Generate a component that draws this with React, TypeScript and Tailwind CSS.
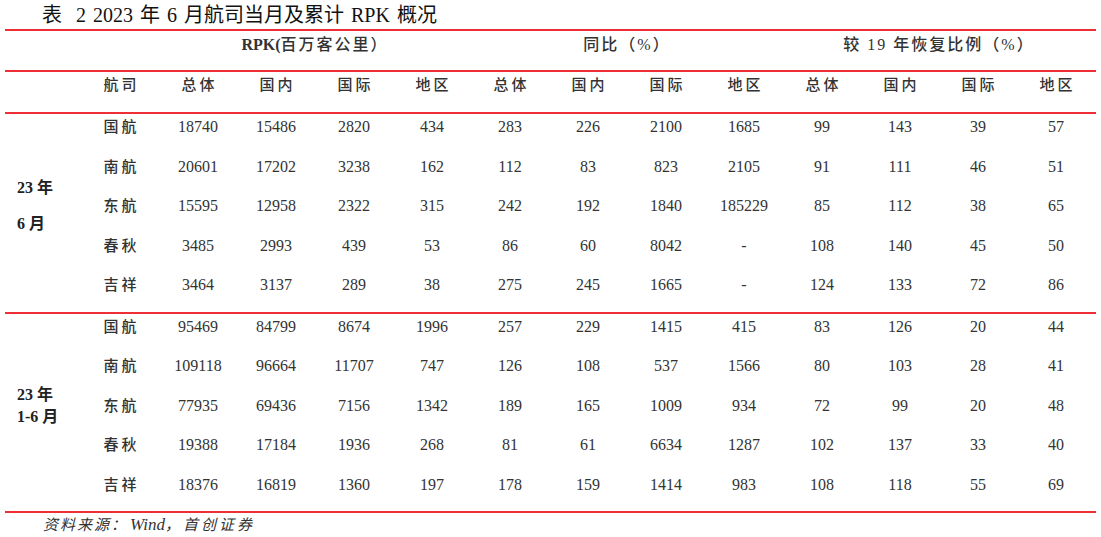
import React from "react";

const FONT = '"Liberation Serif", "Noto Sans CJK SC", serif';

const cols = ["总体", "国内", "国际", "地区"];

type Row = [string, ...string[]];

const g1: Row[] = [
  ["国航", "18740", "15486", "2820", "434", "283", "226", "2100", "1685", "99", "143", "39", "57"],
  ["南航", "20601", "17202", "3238", "162", "112", "83", "823", "2105", "91", "111", "46", "51"],
  ["东航", "15595", "12958", "2322", "315", "242", "192", "1840", "185229", "85", "112", "38", "65"],
  ["春秋", "3485", "2993", "439", "53", "86", "60", "8042", "-", "108", "140", "45", "50"],
  ["吉祥", "3464", "3137", "289", "38", "275", "245", "1665", "-", "124", "133", "72", "86"],
];

const g2: Row[] = [
  ["国航", "95469", "84799", "8674", "1996", "257", "229", "1415", "415", "83", "126", "20", "44"],
  ["南航", "109118", "96664", "11707", "747", "126", "108", "537", "1566", "80", "103", "28", "41"],
  ["东航", "77935", "69436", "7156", "1342", "189", "165", "1009", "934", "72", "99", "20", "48"],
  ["春秋", "19388", "17184", "1936", "268", "81", "61", "6634", "1287", "102", "137", "33", "40"],
  ["吉祥", "18376", "16819", "1360", "197", "178", "159", "1414", "983", "108", "118", "55", "69"],
];

const Line = () => <div className="h-[2px] bg-[#ee2f35]" />;

function Group({ rows, label }: { rows: Row[]; label: React.ReactNode }) {
  return (
    <div className="flex">
      <div className="w-[76px] flex flex-col justify-center pl-[12px] pb-[13px]">{label}</div>
      <div className="flex flex-col">
        {rows.map((r, i) => (
          <div key={i} className="grid grid-cols-[repeat(13,78px)] h-[39.5px] pt-[3px] leading-[20px]">
            {r.map((c, j) =>
              j === 0 ? (
                <div key={j} className="text-center text-[15px] font-medium tracking-[3px] pl-[3px] text-[#333]">
                  {c}
                </div>
              ) : (
                <div key={j} className="text-center text-[16px] text-[#333]">
                  {c}
                </div>
              )
            )}
          </div>
        ))}
      </div>
    </div>
  );
}

export default function App() {
  return (
    <div className="w-[1101px] h-[537px] bg-white overflow-hidden" style={{ fontFamily: FONT }}>
      <div className="h-[29px] pl-[42px] pt-[4px] text-[20px] leading-[22px] text-[#111] whitespace-pre [word-spacing:2px]">
        {"表  2 2023 年 6 月航司当月及累计 RPK 概况"}
      </div>
      <div className="ml-[5px] w-[1091px]">
        <Line />
        <div className="grid grid-cols-[154px_312px_312px_312px] h-[39px] pt-[4px] leading-[20px] text-[#333] text-[16px] font-bold">
          <div />
          <div className="text-center">
            RPK(<span className="font-medium tracking-[2px]">百万客公里）</span>
          </div>
          <div className="text-center">
            <span className="font-medium tracking-[2px]">同比（%）</span>
          </div>
          <div className="text-center">
            <span className="font-medium tracking-[2px]">较 19 年恢复比例（%）</span>
          </div>
        </div>
        <Line />
        <div className="grid grid-cols-[76px_repeat(13,78px)] h-[40px] pt-[3px] leading-[20px] text-[15px] font-medium text-[#333]">
          <div />
          <div className="text-center tracking-[3px] pl-[3px]">航司</div>
          {[0, 1, 2].map((k) =>
            cols.map((c) => (
              <div key={k + c} className="text-center tracking-[3px] pl-[3px]">
                {c}
              </div>
            ))
          )}
        </div>
        <Line />
        <Group
          rows={g1}
          label={
            <div className="font-bold text-[16px] leading-[36px] text-[#222]">
              <div>23 年</div>
              <div>6 月</div>
            </div>
          }
        />
        <Line />
        <Group
          rows={g2}
          label={
            <div className="font-bold text-[16px] leading-[22px] text-[#222]">
              <div>23 年</div>
              <div>1-6 月</div>
            </div>
          }
        />
        <Line />
      </div>
      <div className="pl-[43px] mt-[2px] leading-[20px] text-[15px] italic text-[#333]">
        <span className="tracking-[2px]">资料来源：</span>
        <span className="pl-[2px] text-[17px]">Wind</span>
        <span className="tracking-[3px]">，首创证券</span>
      </div>
    </div>
  );
}
